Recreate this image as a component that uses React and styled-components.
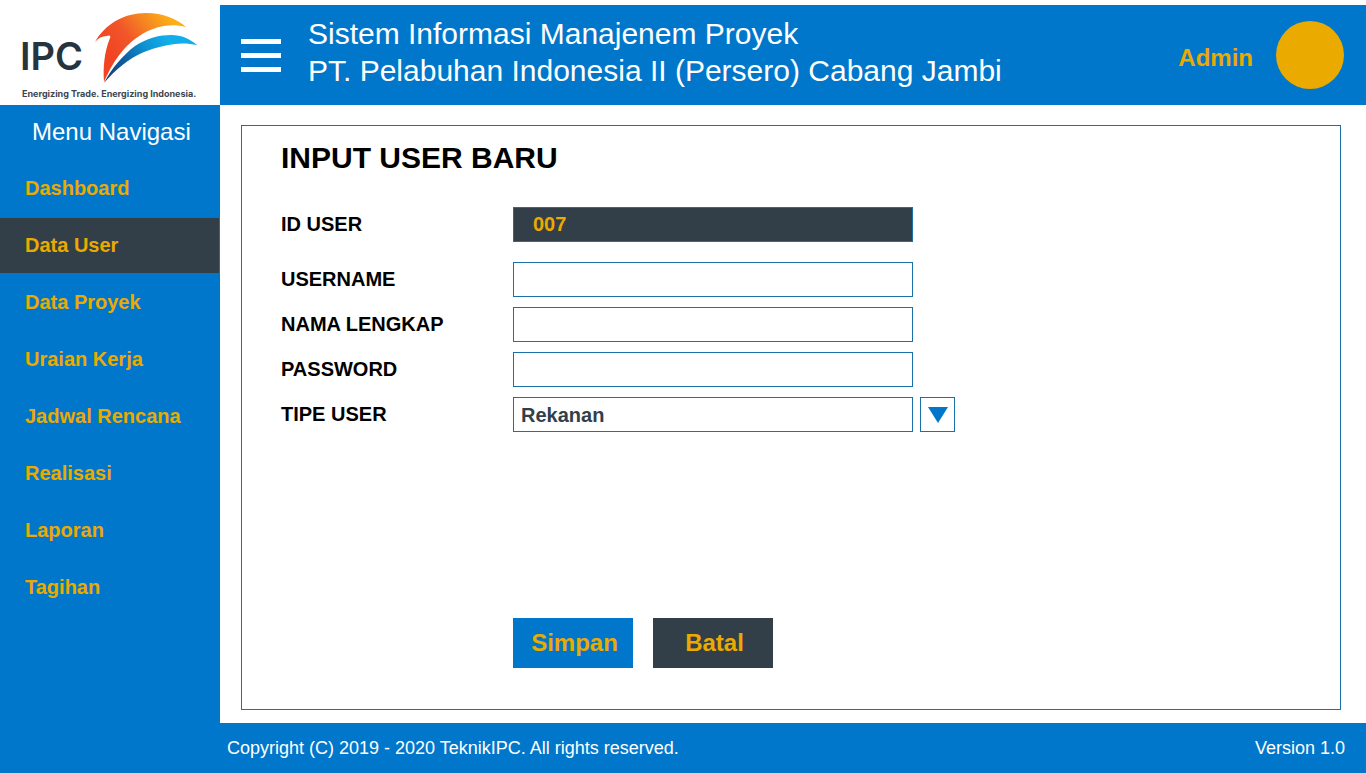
import React, { useRef } from "react";
import styled, { createGlobalStyle } from "styled-components";

const blue = "#0077cb";
const dark = "#333f48";
const gold = "#eaaa00";
const line = "#1a70a8";

const GlobalStyle = createGlobalStyle`
  *, *::before, *::after { box-sizing: border-box; }
  body {
    margin: 0;
    background: #fff;
    color: #000;
    font-family: "Liberation Sans", Arial, sans-serif;
  }
  input, select, button { font-family: inherit; }
`;

const Page = styled.div`
  display: flex;
  min-height: 100vh;
  padding-top: 5px;
`;

const Sidebar = styled.aside`
  flex: 0 0 220px;
  display: flex;
  flex-direction: column;
  background: ${blue};
`;

const LogoLink = styled.a`
  display: block;
  height: 100px;
  background: #fff;
  svg { display: block; }
`;

const NavTitle = styled.h2`
  margin: 0;
  padding: 13px 0 15px 32px;
  color: #fff;
  font-size: 24px;
  font-weight: 400;
  line-height: 28px;
`;

const NavList = styled.ul`
  display: flex;
  flex-direction: column;
  gap: 2px;
  margin: 0;
  padding: 0 1px 0 0;
  list-style: none;
`;

const NavLink = styled.a`
  display: flex;
  align-items: center;
  height: 55px;
  padding-left: 25px;
  background: ${({ $active }) => ($active ? dark : "transparent")};
  color: ${gold};
  font-size: 20px;
  font-weight: 700;
  text-decoration: none;
`;

const Column = styled.div`
  flex: 1;
  min-width: 0;
  display: flex;
  flex-direction: column;
`;

const Header = styled.header`
  display: flex;
  align-items: center;
  min-height: 100px;
  padding: 0 22px 0 21px;
  background: ${blue};
`;

const MenuButton = styled.button`
  display: flex;
  flex-direction: column;
  gap: 9px;
  width: 40px;
  margin-right: 27px;
  padding: 0;
  border: 0;
  background: none;
  cursor: pointer;
`;

const MenuBar = styled.span`
  height: 5px;
  background: #fff;
`;

const SiteTitle = styled.p`
  flex: 1;
  margin: 0;
  padding-bottom: 6px;
  color: #fff;
  font-size: 30px;
  line-height: 37px;
`;

const Account = styled.div`
  display: flex;
  align-items: center;
  gap: 23px;
`;

const AccountName = styled.span`
  padding-top: 6px;
  color: ${gold};
  font-size: 24px;
  font-weight: 700;
`;

const Avatar = styled.span`
  width: 68px;
  height: 68px;
  border-radius: 50%;
  background: ${gold};
`;

const Content = styled.main`
  flex: 1;
  display: flex;
  padding: 20px 25px 13px 21px;
`;

const Panel = styled.form`
  flex: 1;
  display: flex;
  flex-direction: column;
  padding: 14px 39px 41px;
  border: 1px solid ${line};
`;

const PanelTitle = styled.h1`
  margin: 0 0 32px;
  font-size: 30px;
  line-height: 35px;
`;

const Fields = styled.div`
  display: flex;
  flex-direction: column;
  gap: 10px;
`;

const Field = styled.div`
  display: flex;
  align-items: center;
  margin-bottom: ${({ $spaced }) => ($spaced ? "10px" : "0")};
`;

const Label = styled.label`
  flex: 0 0 232px;
  font-size: 20px;
  font-weight: 700;
`;

const TextInput = styled.input`
  width: 400px;
  height: 35px;
  padding: 0 19px;
  border: 1px solid ${line};
  border-radius: 0;
  background: ${({ readOnly }) => (readOnly ? dark : "#fff")};
  color: ${({ readOnly }) => (readOnly ? gold : dark)};
  font-size: 20px;
  font-weight: 700;
`;

const Select = styled.select`
  appearance: none;
  width: 400px;
  height: 35px;
  padding: 0 7px;
  border: 1px solid ${line};
  border-radius: 0;
  background: #fff;
  color: ${dark};
  font-size: 20px;
  font-weight: 700;
`;

const PickerButton = styled.button`
  display: flex;
  align-items: center;
  justify-content: center;
  width: 35px;
  height: 35px;
  margin-left: 7px;
  padding: 0;
  border: 1px solid ${line};
  background: #fff;
  cursor: pointer;
`;

const Actions = styled.div`
  display: flex;
  gap: 20px;
  margin-top: auto;
  padding: 40px 0 0 232px;
`;

const ActionButton = styled.button`
  width: 120px;
  height: 50px;
  padding: 0 0 0 3px;
  border: 0;
  background: ${({ $secondary }) => ($secondary ? dark : blue)};
  color: ${gold};
  font-size: 24px;
  font-weight: 700;
  cursor: pointer;
`;

const Footer = styled.footer`
  display: flex;
  align-items: center;
  justify-content: space-between;
  min-height: 50px;
  padding: 0 21px 0 7px;
  background: ${blue};
  color: #fff;
  font-size: 18px;
`;

const navItems = [
  "Dashboard",
  "Data User",
  "Data Proyek",
  "Uraian Kerja",
  "Jadwal Rencana",
  "Realisasi",
  "Laporan",
  "Tagihan",
];

const textFields = [
  { id: "username", label: "USERNAME", type: "text" },
  { id: "nama", label: "NAMA LENGKAP", type: "text" },
  { id: "password", label: "PASSWORD", type: "password" },
];

function Logo() {
  return (
    <svg width="220" height="100" viewBox="0 5 220 100" role="img" aria-label="IPC">
      <defs>
        <linearGradient id="flame" gradientUnits="userSpaceOnUse" x1="112" y1="56" x2="168" y2="14">
          <stop offset="0" stopColor="#f04423" />
          <stop offset="0.35" stopColor="#f1562a" />
          <stop offset="0.7" stopColor="#f68b1f" />
          <stop offset="1" stopColor="#fcb017" />
        </linearGradient>
        <linearGradient id="wave" gradientUnits="userSpaceOnUse" x1="106" y1="80" x2="168" y2="40">
          <stop offset="0" stopColor="#173a73" />
          <stop offset="0.35" stopColor="#0f5d9f" />
          <stop offset="0.7" stopColor="#0d93d2" />
          <stop offset="1" stopColor="#12aeec" />
        </linearGradient>
      </defs>
      <path
        fill="url(#flame)"
        d="M95 42 C105 24 124 13 146 13 C163 13 177 19 186 27 C171 23 157 26 144 33 C127 43 115 57 104 82 C103 68 104 53 110 38 C111 36 110 35 107 36 C102 36 98 38 95 42 Z"
      />
      <path
        fill="url(#wave)"
        d="M104 83 C112 68 122 56 135 46 C147 38 160 35 171 35 C182 35 190 39 197 45 C180 41 162 45 144 52 C128 59 116 69 104 83 Z"
      />
      <text x="20" y="70" fill="#26343f" fontFamily="Inter, sans-serif" fontSize="38" fontWeight="600">
        IPC
      </text>
      <text x="22" y="97" fill="#3b4650" fontFamily="Inter, sans-serif" fontSize="9" fontWeight="700">
        Energizing Trade. Energizing Indonesia.
      </text>
    </svg>
  );
}

export default function App() {
  const typeRef = useRef(null);

  return (
    <>
      <GlobalStyle />
      <Page>
        <Sidebar>
          <LogoLink href="#beranda">
            <Logo />
          </LogoLink>
          <nav aria-labelledby="nav-title">
            <NavTitle id="nav-title">Menu Navigasi</NavTitle>
            <NavList>
              {navItems.map((item) => (
                <li key={item}>
                  <NavLink
                    href={`#${item.toLowerCase().replace(" ", "-")}`}
                    $active={item === "Data User"}
                    aria-current={item === "Data User" ? "page" : undefined}
                  >
                    {item}
                  </NavLink>
                </li>
              ))}
            </NavList>
          </nav>
        </Sidebar>
        <Column>
          <Header>
            <MenuButton type="button" aria-label="Menu">
              <MenuBar />
              <MenuBar />
              <MenuBar />
            </MenuButton>
            <SiteTitle>
              Sistem Informasi Manajenem Proyek
              <br />
              PT. Pelabuhan Indonesia II (Persero) Cabang Jambi
            </SiteTitle>
            <Account>
              <AccountName>Admin</AccountName>
              <Avatar />
            </Account>
          </Header>
          <Content>
            <Panel onSubmit={(e) => e.preventDefault()}>
              <PanelTitle>INPUT USER BARU</PanelTitle>
              <Fields>
                <Field $spaced>
                  <Label htmlFor="id-user">ID USER</Label>
                  <TextInput id="id-user" type="text" value="007" readOnly />
                </Field>
                {textFields.map(({ id, label, type }) => (
                  <Field key={id}>
                    <Label htmlFor={id}>{label}</Label>
                    <TextInput id={id} name={id} type={type} autoComplete="off" />
                  </Field>
                ))}
                <Field>
                  <Label htmlFor="tipe">TIPE USER</Label>
                  <Select id="tipe" name="tipe" ref={typeRef} defaultValue="Rekanan">
                    <option>Rekanan</option>
                    <option>Admin</option>
                  </Select>
                  <PickerButton
                    type="button"
                    aria-label="Pilih tipe user"
                    onClick={() => typeRef.current?.showPicker?.()}
                  >
                    <svg width="20" height="16" viewBox="0 0 20 16" aria-hidden="true">
                      <path d="M0 0H20L10 16Z" fill={blue} />
                    </svg>
                  </PickerButton>
                </Field>
              </Fields>
              <Actions>
                <ActionButton type="submit">Simpan</ActionButton>
                <ActionButton type="reset" $secondary>
                  Batal
                </ActionButton>
              </Actions>
            </Panel>
          </Content>
          <Footer>
            <span>Copyright (C) 2019 - 2020 TeknikIPC. All rights reserved.</span>
            <span>Version 1.0</span>
          </Footer>
        </Column>
      </Page>
    </>
  );
}
